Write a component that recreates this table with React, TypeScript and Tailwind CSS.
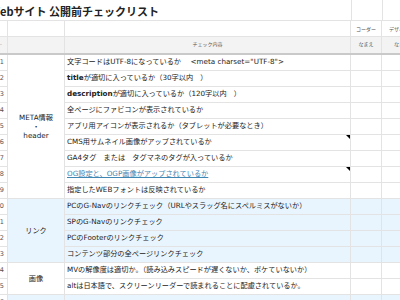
import type { ReactNode } from 'react';

type Row = { text: ReactNode; note?: boolean; link?: boolean };
type Group = { label: ReactNode; blue?: boolean; rows: Row[] };

const cols = 'grid grid-cols-[8px_57px_286px_31px_40px]';
const line = 'border-[#e3e3e3]';

const groups: Group[] = [
  {
    label: (
      <>
        META情報
        <br />・<br />
        header
      </>
    ),
    rows: [
      { text: <>文字コードはUTF-8になっているか　 &lt;meta charset="UTF-8"&gt;</> },
      {
        text: (
          <>
            <b>title</b> が適切に入っているか（30字以内　）
          </>
        ),
      },
      {
        text: (
          <>
            <b>description</b> が適切に入っているか（120字以内　）
          </>
        ),
      },
      { text: '全ページにファビコンが表示されているか' },
      { text: 'アプリ用アイコンが表示されるか（タブレットが必要なとき）' },
      { text: 'CMS用サムネイル画像がアップされているか', note: true },
      { text: 'GA4タグ　または　タグマネのタグが入っているか' },
      { text: 'OG設定と、OGP画像がアップされているか', note: true, link: true },
      { text: '指定したWEBフォントは反映されているか' },
    ],
  },
  {
    label: 'リンク',
    blue: true,
    rows: [
      { text: 'PCのG-Navのリンクチェック（URLやスラッグ名にスペルミスがないか）' },
      { text: 'SPのG-Navのリンクチェック' },
      { text: 'PCのFooterのリンクチェック' },
      { text: 'コンテンツ部分の全ページリンクチェック' },
    ],
  },
  {
    label: '画像',
    rows: [
      { text: 'MVの解像度は適切か。（読み込みスピードが遅くないか、ボケていないか）' },
      { text: 'altは日本語で、スクリーンリーダーで読まれることに配慮されているか。' },
    ],
  },
  { label: '', blue: true, rows: [{ text: '' }, { text: '' }] },
];

/* ─── spans for the category column ─── */
const spanClass: Record<number, string> = {
  2: 'row-span-2',
  4: 'row-span-4',
  9: 'row-span-9',
};

export default function App() {
  let n = 0;
  return (
    <div
      className="w-[400px] h-[300px] overflow-hidden bg-white text-[#222]"
      style={{ fontFamily: '"DejaVu Sans", "Noto Sans CJK JP", sans-serif' }}
    >
      <div className="w-[422px]">
        {/* title row */}
        <div className={`${cols} h-[21px]`}>
          <div className={`col-span-3 border-b ${line} overflow-hidden whitespace-nowrap`}>
            <h1
              className="ml-[-10px] pt-[3px] text-[11px] font-bold leading-[16px]"
              style={{ fontFamily: '"Noto Sans CJK JP", sans-serif' }}
            >
              Webサイト 公開前チェックリスト
            </h1>
          </div>
          <div className={`border-b border-l ${line}`} />
          <div className={`border-b border-l ${line}`} />
        </div>

        {/* role row */}
        <div className={`${cols} h-4 text-[5px] text-[#555]`}>
          <div className={`border-b border-r ${line}`} />
          <div className={`border-b border-r ${line}`} />
          <div className={`border-b border-r ${line}`} />
          <div className={`border-b border-r ${line} flex items-center justify-center pt-[2px]`}>コーダー</div>
          <div className={`border-b border-r ${line} flex items-center justify-center whitespace-nowrap pt-[2px]`}>
            デザイナー
          </div>
        </div>

        {/* grey header */}
        <div className={`${cols} h-[18px] bg-[#f3f3f3] text-[5px] text-[#555] border-b-2 border-[#c9c9c9]`}>
          <div className={`border-r ${line} flex items-center text-[#888]`}>-</div>
          <div className={`border-r ${line}`} />
          <div className={`border-r ${line} flex items-center justify-center`}>チェック内容</div>
          <div className={`border-r ${line} flex items-center justify-center`}>なまえ</div>
          <div className={`border-r ${line} flex items-center justify-center`}>なまえ</div>
        </div>

        {/* body */}
        <div className={`${cols} auto-rows-[16px] text-[7.2px]`}>
          {groups.map((g, gi) =>
            g.rows.map((r, ri) => {
              n += 1;
              const bg = g.blue ? 'bg-[#e8f5ff]' : 'bg-white';
              return [
                <div
                  key={`n${gi}-${ri}`}
                  className={`col-start-1 border-b border-r ${line} overflow-hidden flex items-center justify-end pr-[3px] text-[#555] text-[6.5px]`}
                >
                  {n}
                </div>,
                ri === 0 && (
                  <div
                    key={`g${gi}`}
                    className={`col-start-2 ${spanClass[g.rows.length]} border-b border-r ${line} ${bg} flex items-center justify-center text-center leading-[9px]`}
                  >
                    <span>{g.label}</span>
                  </div>
                ),
                <div
                  key={`t${gi}-${ri}`}
                  className={`col-start-3 relative border-b border-r ${line} ${bg} flex items-center pl-[2px] whitespace-nowrap overflow-hidden`}
                >
                  {r.link ? <span className="text-[#3f86b3] underline">{r.text}</span> : r.text}
                  {r.note && (
                    <span className="absolute right-0 top-0 w-0 h-0 border-l-[4px] border-l-transparent border-t-[4px] border-t-black" />
                  )}
                </div>,
                <div key={`c${gi}-${ri}`} className={`col-start-4 border-b border-r ${line} ${bg}`} />,
                <div key={`d${gi}-${ri}`} className={`col-start-5 border-b border-r ${line} ${bg}`} />,
              ];
            })
          )}
        </div>
      </div>
    </div>
  );
}
